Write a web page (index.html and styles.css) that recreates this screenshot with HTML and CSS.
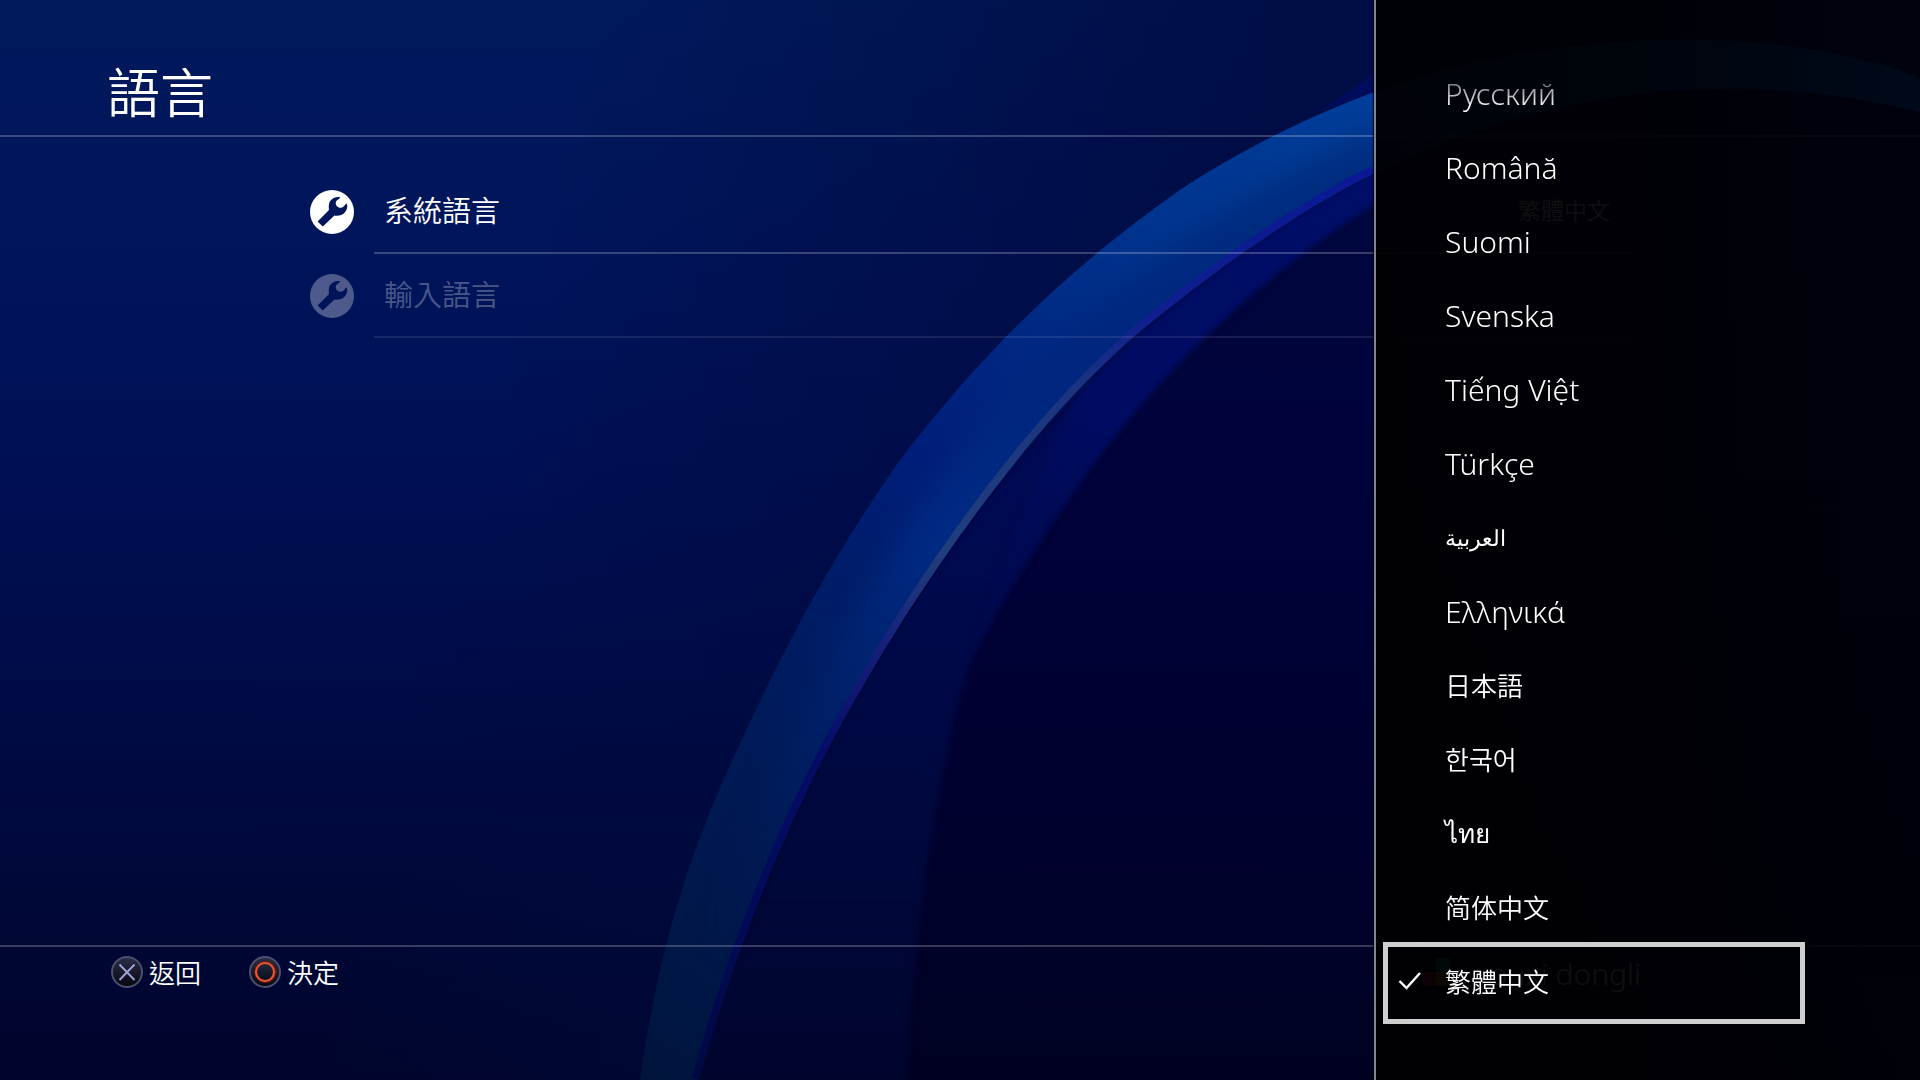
FILE: index.html
```html
<!DOCTYPE html>
<html lang="zh-Hant">
<head>
    <meta charset="UTF-8">
    <meta name="viewport" content="width=device-width, initial-scale=1.0">
    <title>語言</title>
    <link rel="stylesheet" href="styles.css">
</head>
<body>
    <!-- Wallpaper: big blue ribbon -->
    <svg class="wallpaper" viewBox="0 0 1920 1080" preserveAspectRatio="xMidYMid slice" aria-hidden="true">
        <defs>
            <linearGradient id="sky" x1="0" y1="0" x2="0" y2="1">
                <stop offset="0" stop-color="#001a5c"/>
                <stop offset="0.25" stop-color="#00145a"/>
                <stop offset="0.45" stop-color="#000f54"/>
                <stop offset="0.7" stop-color="#000a42"/>
                <stop offset="1" stop-color="#00052b"/>
            </linearGradient>
            <linearGradient id="sky-shade" gradientUnits="userSpaceOnUse" x1="600" y1="0" x2="1250" y2="180">
                <stop offset="0" stop-color="#000a40" stop-opacity="0"/>
                <stop offset="1" stop-color="#000a40" stop-opacity="0.8"/>
            </linearGradient>
            <linearGradient id="inside" gradientUnits="userSpaceOnUse" x1="0" y1="180" x2="0" y2="1080">
                <stop offset="0" stop-color="#00083e"/>
                <stop offset="0.35" stop-color="#00023a"/>
                <stop offset="0.7" stop-color="#00002e"/>
                <stop offset="1" stop-color="#000222"/>
            </linearGradient>
            <linearGradient id="glow" gradientUnits="userSpaceOnUse" x1="0" y1="180" x2="0" y2="1080">
                <stop offset="0" stop-color="#000c60"/>
                <stop offset="0.4" stop-color="#000a50"/>
                <stop offset="0.7" stop-color="#00083e"/>
                <stop offset="1" stop-color="#00052e"/>
            </linearGradient>
            <linearGradient id="band" gradientUnits="userSpaceOnUse" x1="1250" y1="150" x2="960" y2="700">
                <stop offset="0" stop-color="#000e68"/>
                <stop offset="0.5" stop-color="#000c62"/>
                <stop offset="1" stop-color="#000a4c" stop-opacity="0"/>
            </linearGradient>
            <linearGradient id="ribbon" gradientUnits="userSpaceOnUse" x1="1374" y1="90" x2="640" y2="1080">
                <stop offset="0" stop-color="#003e9a"/>
                <stop offset="0.2" stop-color="#00348e"/>
                <stop offset="0.45" stop-color="#001e7a"/>
                <stop offset="0.65" stop-color="#001c60"/>
                <stop offset="0.85" stop-color="#00184c"/>
                <stop offset="1" stop-color="#00143c"/>
            </linearGradient>
            <linearGradient id="sheen" gradientUnits="userSpaceOnUse" x1="1374" y1="150" x2="720" y2="960">
                <stop offset="0" stop-color="#002e80"/>
                <stop offset="0.35" stop-color="#00267e"/>
                <stop offset="0.55" stop-color="#002a84"/>
                <stop offset="0.75" stop-color="#002068"/>
                <stop offset="1" stop-color="#00184a" stop-opacity="0"/>
            </linearGradient>
            <linearGradient id="rim" gradientUnits="userSpaceOnUse" x1="0" y1="170" x2="0" y2="1080">
                <stop offset="0" stop-color="#0a1894"/>
                <stop offset="0.16" stop-color="#101e90"/>
                <stop offset="0.24" stop-color="#1c3480"/>
                <stop offset="0.42" stop-color="#203e7c"/>
                <stop offset="0.52" stop-color="#16207a"/>
                <stop offset="0.64" stop-color="#040c68"/>
                <stop offset="1" stop-color="#000844"/>
            </linearGradient>
            <filter id="soft" color-interpolation-filters="sRGB" x="-20%" y="-20%" width="140%" height="140%"><feGaussianBlur stdDeviation="14"/></filter>
            <filter id="softer" color-interpolation-filters="sRGB" x="-20%" y="-20%" width="140%" height="140%"><feGaussianBlur stdDeviation="3"/></filter>
            <clipPath id="ribbon-shape">
                <path d="M640 1080 C662 925 700 830 738 748 C784 648 830 560 900 460 C990 342 1080 260 1180 190 C1240 150 1310 116 1374 92 C1550 30 1760 20 1920 77 V112 C1750 70 1560 82 1374 173 C1300 210 1220 265 1133 337 C1070 394 1030 442 986 500 C930 575 890 637 840 726 C784 829 735 950 699 1080 Z"/>
            </clipPath>
        </defs>
        <rect width="1920" height="1080" fill="url(#sky)"/>
        <rect width="1920" height="1080" fill="url(#sky-shade)"/>
        <!-- area under the ribbon -->
        <path fill="url(#inside)" d="M699 1080 C735 950 784 829 840 726 C890 637 930 575 986 500 C1110 345 1240 240 1374 173 C1560 82 1750 70 1920 112 V1080 Z"/>
        <path fill="url(#glow)" filter="url(#softer)" d="M690 1100 C735 950 784 829 840 726 C890 637 930 575 986 500 C1110 345 1240 240 1374 173 V203 C1270 268 1180 350 1100 453 C1050 520 1000 600 967 670 C935 780 912 950 906 1100 Z"/>
        <path fill="url(#band)" filter="url(#softer)" d="M1374 173 C1270 230 1160 310 1080 393 C1045 460 1000 560 967 670 C1000 600 1050 520 1100 453 C1180 350 1270 268 1374 203 Z"/>
        <path fill="#000c5c" d="M1314 113 Q1350 94 1374 72 V92 Z"/>
        <!-- ribbon -->
        <g clip-path="url(#ribbon-shape)">
            <rect width="1920" height="1080" fill="url(#ribbon)"/>
            <path fill="url(#sheen)" filter="url(#soft)" d="M1420 115 C1290 160 1170 240 1060 340 C960 440 890 550 840 640 C780 760 740 860 700 980 L740 1000 L860 740 L1000 520 L1180 320 L1420 170 Z"/>
            <path fill="none" stroke="url(#rim)" stroke-width="15" d="M1374 173 C1300 210 1220 265 1133 337 C1070 394 1030 442 986 500 C930 575 890 637 840 726 C784 829 735 950 699 1080"/>
        </g>
    </svg>

    <div class="screen">
        <header class="header">
            <h1 class="title">語言</h1>
        </header>

        <main class="settings">
            <button class="setting" type="button">
                <svg class="setting-icon" viewBox="0 0 44 44" aria-hidden="true">
                    <path fill="currentColor" fill-rule="evenodd" d="M22 0a22 22 0 1 0 0 44a22 22 0 1 0 0-44ZM30.3 7.2C26 6.4 21.8 8.2 19.8 11.6C18.6 14 18.6 17.2 19 20L7.6 31.4L12.8 36.4L24.4 25.4C28 26.2 32.2 25.2 34.8 22.4C37.2 19.8 38 16.4 36.6 13.2C34.6 14.8 33.4 18.2 30 17.8C26.8 17.4 25 14.2 26 11.6C26.8 9.8 29.4 9.2 30.3 7.2Z"/>
                </svg>
                <span class="setting-line">
                    <span class="setting-name">系統語言</span>
                    <span class="setting-value">繁體中文</span>
                </span>
            </button>
            <button class="setting disabled" type="button" disabled>
                <svg class="setting-icon" viewBox="0 0 44 44" aria-hidden="true">
                    <path fill="currentColor" fill-rule="evenodd" d="M22 0a22 22 0 1 0 0 44a22 22 0 1 0 0-44ZM30.3 7.2C26 6.4 21.8 8.2 19.8 11.6C18.6 14 18.6 17.2 19 20L7.6 31.4L12.8 36.4L24.4 25.4C28 26.2 32.2 25.2 34.8 22.4C37.2 19.8 38 16.4 36.6 13.2C34.6 14.8 33.4 18.2 30 17.8C26.8 17.4 25 14.2 26 11.6C26.8 9.8 29.4 9.2 30.3 7.2Z"/>
                </svg>
                <span class="setting-line">
                    <span class="setting-name">輸入語言</span>
                </span>
            </button>
        </main>

        <footer class="footer">
            <div class="hints">
                <button class="hint" type="button">
                    <svg class="hint-icon" viewBox="0 0 32 32" aria-hidden="true">
                        <defs>
                            <linearGradient id="pad" x1="0" y1="0" x2="0" y2="1">
                                <stop offset="0" stop-color="#2c2f48"/>
                                <stop offset="1" stop-color="#04050e"/>
                            </linearGradient>
                        </defs>
                        <circle cx="16" cy="16" r="15" fill="url(#pad)" stroke="#4c4f70" stroke-width="2"/>
                        <path d="M8.5 8.5L23.5 24M23.5 8.5L8.5 24" stroke="#a2a4dc" stroke-width="1.8" fill="none"/>
                    </svg>
                    <span>返回</span>
                </button>
                <button class="hint" type="button">
                    <svg class="hint-icon" viewBox="0 0 32 32" aria-hidden="true">
                        <circle cx="16" cy="16" r="15" fill="url(#pad)" stroke="#4c4f70" stroke-width="2"/>
                        <circle cx="16.5" cy="16" r="9.5" fill="none" stroke="#6a1c10" stroke-width="3"/>
                        <circle cx="16" cy="16" r="9" fill="none" stroke="#e8583a" stroke-width="2"/>
                    </svg>
                    <span>決定</span>
                </button>
            </div>
            <div class="user">
                <svg class="avatar" viewBox="0 0 28 28" aria-hidden="true">
                    <path fill="#00a060" d="M14 0h14v14H14z"/>
                    <path fill="#e02010" d="M0 14h14v14H0z"/>
                    <path fill="#d0a000" d="M14 14h14v14H14z"/>
                </svg>
                <span>youxi dongli</span>
            </div>
        </footer>
    </div>

    <!-- Language side menu -->
    <aside class="menu">
        <ul class="languages">
            <li><button class="language" type="button" lang="ru">Русский</button></li>
            <li><button class="language" type="button" lang="ro">Română</button></li>
            <li><button class="language" type="button" lang="fi">Suomi</button></li>
            <li><button class="language" type="button" lang="sv">Svenska</button></li>
            <li><button class="language" type="button" lang="vi">Tiếng Việt</button></li>
            <li><button class="language" type="button" lang="tr">Türkçe</button></li>
            <li><button class="language arabic" type="button" lang="ar">العربية</button></li>
            <li><button class="language" type="button" lang="el">Ελληνικά</button></li>
            <li><button class="language cjk" type="button" lang="ja">日本語</button></li>
            <li><button class="language cjk" type="button" lang="ko">한국어</button></li>
            <li><button class="language thai" type="button" lang="th">ไทย</button></li>
            <li><button class="language cjk" type="button" lang="zh-Hans">简体中文</button></li>
            <li>
                <button class="language cjk selected" type="button" lang="zh-Hant" aria-pressed="true">
                    <svg class="check" viewBox="0 0 24 20" aria-hidden="true">
                        <path d="M1.5 11L8.5 18L22 3" fill="none" stroke="currentColor" stroke-width="2.4"/>
                    </svg>
                    <span>繁體中文</span>
                </button>
            </li>
        </ul>
    </aside>
</body>
</html>
```
FILE: styles.css
```css
* {
    box-sizing: border-box;
}

body {
    margin: 0;
    background-color: #000a48;
    color: white;
    font-family: "Noto Sans", "Noto Sans CJK TC", sans-serif;
    font-weight: 300;
    overflow: hidden;
}

button {
    padding: 0;
    background: none;
    border: none;
    color: inherit;
    font: inherit;
    text-align: left;
    cursor: pointer;
}

.wallpaper {
    position: absolute;
    top: 0;
    left: 0;
    width: 100%;
    height: 100%;
}

/* Main screen */
.screen {
    position: relative;
    display: flex;
    flex-direction: column;
    min-height: 100vh;
    font-family: "Noto Sans CJK TC", "Noto Sans", sans-serif;
    font-weight: 350;
}

.header {
    padding: 52px 107px 6px;
    border-bottom: 2px solid rgba(255, 255, 255, 0.22);
}

.title {
    margin: 0;
    font-size: 53px;
    font-weight: 350;
    line-height: 77px;
}

.settings {
    flex: 1;
    padding: 33px 290px 0 310px;
}

.setting {
    display: flex;
    align-items: center;
    gap: 20px;
    width: 100%;
    font-size: 29px;
}

.setting-icon {
    flex: none;
    width: 44px;
    height: 44px;
}

.setting-line {
    flex: 1;
    display: flex;
    align-items: center;
    padding: 0 20px 4px 10px;
    height: 84px;
    border-bottom: 2px solid rgba(255, 255, 255, 0.22);
}

.setting-name {
    flex: 1;
}

.setting-value {
    font-size: 23px;
}

.setting.disabled {
    color: rgba(255, 255, 255, 0.3);
}

.setting.disabled .setting-line {
    border-color: rgba(255, 255, 255, 0.09);
}

.footer {
    display: flex;
    justify-content: space-between;
    height: 135px;
    padding: 9px 279px 0 111px;
    border-top: 2px solid rgba(255, 255, 255, 0.22);
}

.hints {
    display: flex;
    align-items: flex-start;
    gap: 48px;
}

.hint {
    display: flex;
    align-items: center;
    gap: 6px;
    font-size: 26px;
    line-height: 32px;
}

.hint-icon {
    width: 32px;
    height: 32px;
}

.user {
    display: flex;
    align-items: flex-start;
    gap: 26px;
    padding-top: 2px;
    font-family: "Noto Sans", sans-serif;
    font-size: 30px;
    font-weight: 300;
    line-height: 32px;
}

.avatar {
    width: 28px;
    height: 28px;
}

/* Side menu */
.menu {
    position: absolute;
    top: 0;
    right: 0;
    bottom: 0;
    width: 546px;
    border-left: 2px solid #84848e;
    background: linear-gradient(to right, rgba(0, 0, 2, 0.95), rgba(0, 0, 3, 0.94) 50%, rgba(0, 0, 4, 0.85));
    box-shadow: -1px 0 1px rgba(0, 0, 20, 0.8);
}

.languages {
    margin: 0;
    padding: 58px 115px 0 7px;
    list-style: none;
    -webkit-mask-image: linear-gradient(transparent 60px, black 108px);
    mask-image: linear-gradient(transparent 60px, black 108px);
}

.language {
    display: flex;
    align-items: center;
    width: 100%;
    height: 74px;
    padding: 0 0 4px 62px;
    font-size: 30px;
}

.language.cjk {
    padding-bottom: 6px;
    font-family: "Noto Sans CJK TC", sans-serif;
    font-size: 26px;
    font-weight: 350;
}

.language.cjk:lang(ja) {
    font-family: "Noto Sans CJK JP", sans-serif;
}

.language.cjk:lang(ko) {
    font-family: "Noto Sans CJK KR", sans-serif;
}

.language.cjk:lang(zh-Hans) {
    font-family: "Noto Sans CJK SC", sans-serif;
}

.language.arabic {
    font-size: 22px;
}

.language.thai {
    font-size: 26px;
}

.language.selected {
    height: 82px;
    margin: -4px 0;
    padding-left: 10px;
    gap: 23px;
    border: 5px solid #cfcfcf;
}

.check {
    width: 24px;
    height: 20px;
}
```
